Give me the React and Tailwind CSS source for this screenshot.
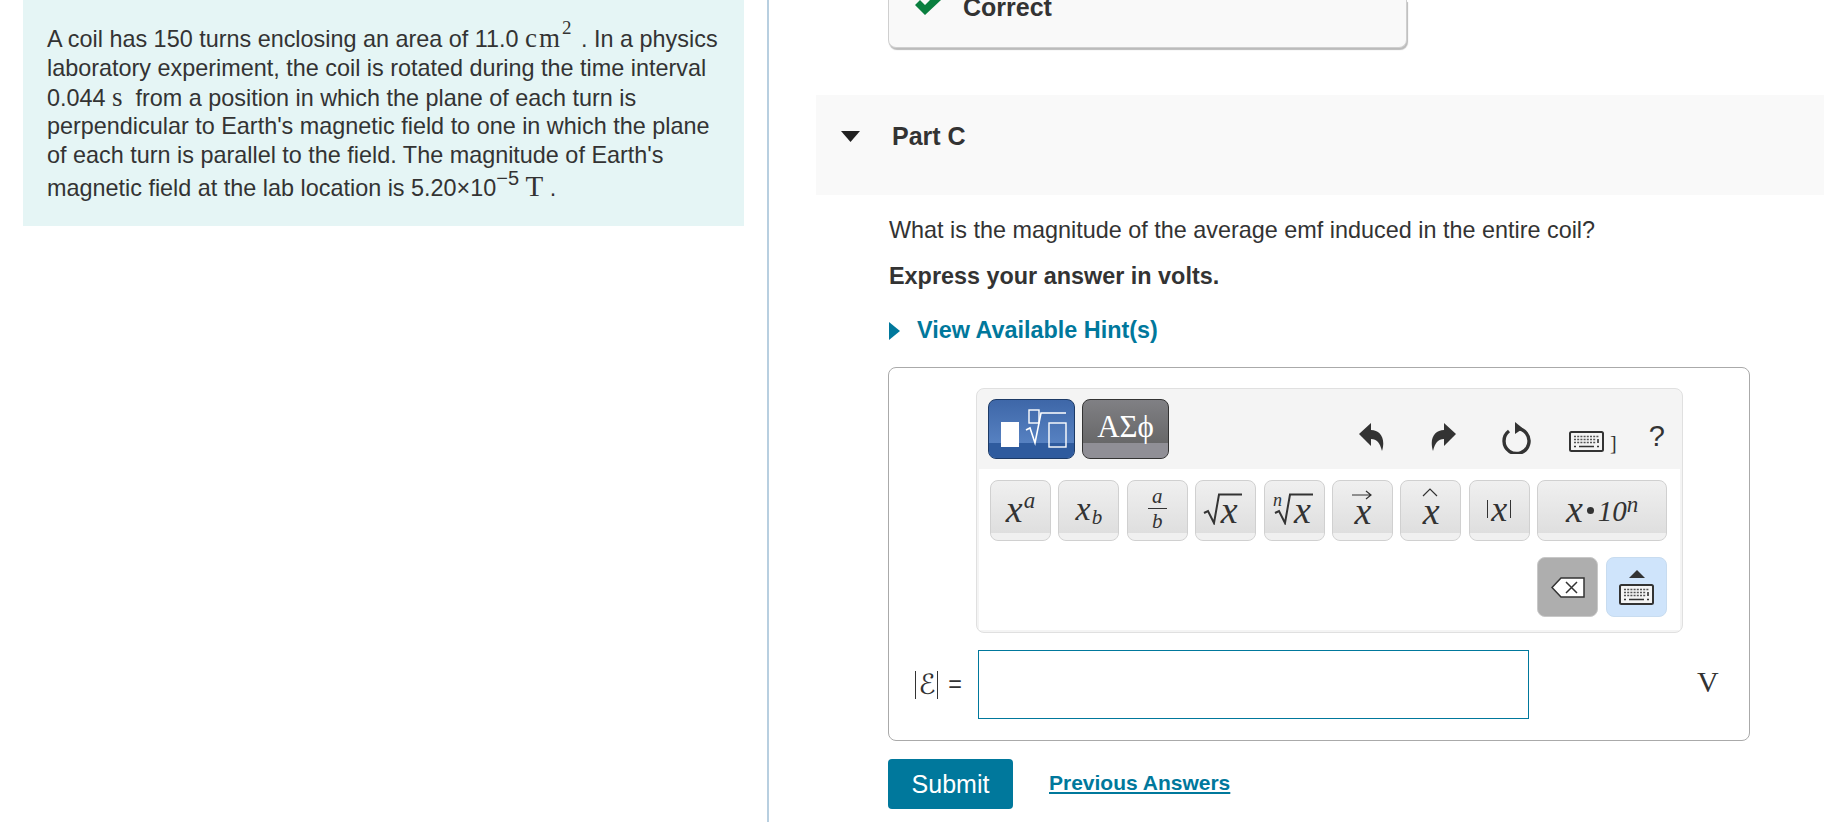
import React from "react";

const serif = "font-['Liberation_Serif',serif]";

const Keyboard = () => (
  <svg width="35" height="21" viewBox="0 0 35 21">
    <rect x="1" y="1" width="33" height="19" rx="1.5" fill="#f4f4f4" stroke="#333" strokeWidth="2" />
    <path d="M5 5.5H30M5 8.5H27M5 11.5H27" stroke="#555" strokeWidth="1.6" strokeDasharray="2 1.2" />
    <path d="M29 8V12M5 15.5H7M10 15.5H25M28 15.5H30" stroke="#333" strokeWidth="1.6" />
  </svg>
);

const Radical = () => (
  <svg className="absolute left-0 top-0" width="40" height="32" viewBox="0 0 40 32">
    <path d="M1 20L5 18L11 30L16 1.5H39" fill="none" stroke="#333" strokeWidth="2" />
  </svg>
);

const KeyButton = ({ width = "w-[61px]", children }) => (
  <div className={`relative ${width} h-[61px] shrink-0 rounded-lg border border-[#d0d0d0] bg-[linear-gradient(#f0f0f0,#dcdcdc)] overflow-hidden`}>
    <div className="absolute bottom-0 left-0 right-0 h-[7px] bg-[#f0f0f0]" />
    <div className={`absolute inset-0 flex items-center justify-center pb-1 ${serif} italic text-[#333]`}>{children}</div>
  </div>
);

function Toolbar() {
  return (
    <div className="ml-[87px] mt-5 w-[707px] h-[245px] rounded-lg border border-[#e0e0e0] bg-[#f4f4f4]">
      <div className="flex h-[80px] pl-[11px] pt-[10px]">
        <div className="relative w-[87px] h-[60px] rounded-lg border border-[#1c3a66] overflow-hidden bg-[linear-gradient(#3e67a8,#5f8aca)]">
          <div className="absolute bottom-0 left-0 right-0 h-[15px] bg-[#2f5b9e]" />
          <svg className="absolute left-0 top-0" width="85" height="58" viewBox="0 0 85 58">
            <rect x="12" y="22" width="18" height="25" fill="#fff" />
            <rect x="40" y="10" width="10" height="13" fill="none" stroke="#fff" strokeWidth="1.4" />
            <path d="M37 30L41 28L46 43L52 13H77" fill="none" stroke="#fff" strokeWidth="1.6" />
            <rect x="60" y="23" width="17" height="24" fill="none" stroke="#fff" strokeWidth="1.4" />
          </svg>
        </div>
        <div className="relative ml-[7px] w-[87px] h-[60px] rounded-lg border border-[#333] overflow-hidden bg-[linear-gradient(#808084,#5f5f5f)]">
          <div className="absolute bottom-0 left-0 right-0 h-[15px] bg-[#908f96]" />
          <div className={`absolute left-0 right-0 top-[10px] text-center ${serif} text-[31px] leading-[34px] text-white`}>ΑΣϕ</div>
        </div>
        <div className="ml-[190px] mt-[23px] flex items-start">
          <svg className="mt-[1px]" width="26" height="29" viewBox="0 0 26 29">
            <path d="M0 11L12 0V7C21 7 27 15 23 28C21 20 18 16 12 16V23Z" fill="#333" />
          </svg>
          <svg className="ml-[45px] mt-[1px]" width="26" height="29" viewBox="0 0 26 29">
            <path d="M26 11L14 0V7C5 7 -1 15 3 28C5 20 8 16 14 16V23Z" fill="#333" />
          </svg>
          <svg className="ml-[44px]" width="32" height="32" viewBox="0 0 32 32">
            <path d="M9 9A12.5 12.5 0 1 0 16 6.5" fill="none" stroke="#333" strokeWidth="3.4" />
            <path d="M15 0L23 6.5L15 12Z" fill="#333" />
          </svg>
          <div className="ml-[37px] mt-[9px]"><Keyboard /></div>
          <div className={`ml-[6px] mt-[11px] ${serif} text-[20px] leading-[20px] text-[#333]`}>]</div>
          <div className="ml-[32px] mt-[-1px] font-['Liberation_Sans',sans-serif] text-[29px] leading-[30px] text-[#333]">?</div>
        </div>
      </div>
      <div className="mx-[2px] h-[161px] bg-white pl-[11px] pt-[11px]">
        <div className="flex gap-[7.4px]">
          <KeyButton><span className="text-[38px] leading-[40px]">x</span><span className="ml-[1px] mb-[16px] text-[23px] leading-[24px]">a</span></KeyButton>
          <KeyButton><span className="text-[34px] leading-[40px]">x</span><span className="ml-[1px] mt-[16px] text-[21px] leading-[24px]">b</span></KeyButton>
          <KeyButton>
            <span className="flex flex-col items-center text-[21px] leading-[24px]">
              <span className="border-b border-[#333] px-1">a</span>
              <span>b</span>
            </span>
          </KeyButton>
          <KeyButton>
            <span className="relative mr-[6px] block h-[32px] w-[40px]"><Radical /><span className="absolute left-[18px] top-[-5px] text-[38px] leading-[44px]">x</span></span>
          </KeyButton>
          <KeyButton>
            <span className="relative block h-[32px] w-[40px]"><Radical /><span className="absolute left-[-1px] top-[-3px] text-[18px] leading-[20px]">n</span><span className="absolute left-[20px] top-[-5px] text-[38px] leading-[44px]">x</span></span>
          </KeyButton>
          <KeyButton>
            <span className="relative block h-[36px] w-[20px]">
              <svg className="absolute left-0 top-[-1px]" width="20" height="10" viewBox="0 0 20 10">
                <path d="M0 5H19M14 1L19 5L14 9" fill="none" stroke="#333" strokeWidth="1.2" />
              </svg>
              <span className="absolute left-[2px] top-[-2px] text-[38px] leading-[44px]">x</span>
            </span>
          </KeyButton>
          <KeyButton>
            <span className="relative block h-[36px] w-[20px]">
              <svg className="absolute left-0 top-[-4px]" width="20" height="10" viewBox="0 0 20 10">
                <path d="M2 9L9 2L16 9" fill="none" stroke="#333" strokeWidth="1.2" />
              </svg>
              <span className="absolute left-[2px] top-[-2px] text-[38px] leading-[44px]">x</span>
            </span>
          </KeyButton>
          <KeyButton>
            <span className="h-[18px] w-px bg-[#333]" />
            <span className="mx-[3px] text-[36px] leading-[40px]">x</span>
            <span className="h-[18px] w-px bg-[#333]" />
          </KeyButton>
          <KeyButton width="w-[130px]">
            <span className="text-[38px] leading-[40px]">x</span>
            <span className="mx-[4px] mt-1 h-[7px] w-[7px] rounded-full bg-[#333]" />
            <span className="mt-1 text-[29px] leading-[36px]">10</span>
            <span className="mb-[8px] text-[23px] leading-[24px]">n</span>
          </KeyButton>
        </div>
        <div className="mt-[16px] ml-[547px] flex gap-[8px]">
          <div className="flex h-[60px] w-[61px] items-center justify-center rounded-lg border border-[#c8c8c8] bg-[#aeaeae]">
            <svg width="34" height="21" viewBox="0 0 34 21">
              <path d="M1 10.5L10 1H33V20H10Z" fill="#fff" stroke="#333" strokeWidth="1.5" />
              <path d="M15 5L26 16M26 5L15 16" stroke="#333" strokeWidth="1.5" />
            </svg>
          </div>
          <div className="flex h-[60px] w-[61px] flex-col items-center justify-center gap-[6px] rounded-lg border border-[#c8dcf0] bg-[#cfe4fb]">
            <svg width="16" height="8" viewBox="0 0 16 8"><path d="M8 0L16 8H0Z" fill="#333" /></svg>
            <Keyboard />
          </div>
        </div>
      </div>
    </div>
  );
}

export default function App() {
  return (
    <div className="flex h-[822px] overflow-hidden bg-white font-['Liberation_Sans',sans-serif] text-[#333] text-[23.4px] leading-[29px]">
      {/* Problem statement */}
      <div className="w-[767px] shrink-0 px-[23px]">
        <div className="h-[226px] bg-[#e5f5f5] pl-6 pt-[24px] whitespace-nowrap leading-[28.8px]">
          <div>A coil has 150 turns enclosing an area of 11.0 <span className={`${serif} text-[27px] tracking-[2px]`}>cm<sup className="-top-[13px] text-[19px] leading-none">2</sup></span><span className="ml-[1px]"> . In a physics</span></div>
          <div>laboratory experiment, the coil is rotated during the time interval</div>
          <div>0.044 <span className={`${serif} text-[27px]`}>s</span> &nbsp;from a position in which the plane of each turn is</div>
          <div>perpendicular to Earth's magnetic field to one in which the plane</div>
          <div>of each turn is parallel to the field. The magnitude of Earth's</div>
          <div className="mt-[2px]">magnetic field at the lab location is 5.20×10<sup className="-top-[11px] text-[20px] leading-none">−5</sup> <span className={`${serif} text-[29px]`}>T</span> .</div>
        </div>
      </div>
      <div className="w-[2px] shrink-0 bg-[#b8cfe0]" />

      {/* Part C */}
      <div className="flex-1">
        <div className="ml-[119px] flex h-[48px] w-[519px] rounded-b-lg border-x border-b border-[#cfcfcf] bg-[#f9f9f9] pl-[26px] shadow-[1px_2px_1px_#bbb]">
          <svg width="26" height="15" viewBox="0 0 26 15">
            <path d="M0 5L5 0L10 5L20 -5L26 0L10 15Z" fill="#0a7f3f" />
          </svg>
          <span className="-mt-[7px] ml-[22px] text-[25px] font-bold">Correct</span>
        </div>

        <div className="ml-[47px] mt-[47px] flex h-[100px] bg-[#f9f9f9] pt-[27px]">
          <svg className="ml-[25px] mt-[9px]" width="19" height="11" viewBox="0 0 19 11">
            <path d="M0 0H19L9.5 11Z" fill="#222" />
          </svg>
          <span className="ml-[32px] text-[25px] font-bold">Part C</span>
        </div>

        <div className="ml-[120px]">
          <p className="mt-[21px]">What is the magnitude of the average emf induced in the entire coil?</p>
          <p className="mt-[17px] font-bold">Express your answer in volts.</p>
          <div className="mt-[25px] flex items-center font-bold text-[#00789c]">
            <svg width="11" height="18" viewBox="0 0 11 18"><path d="M0 0L11 9L0 18Z" fill="#00789c" /></svg>
            <span className="ml-[17px]">View Available Hint(s)</span>
          </div>

          <div className="-ml-px mt-[22px] h-[374px] w-[862px] rounded-lg border border-[#aaa]">
            <Toolbar />
            <div className="mt-[17px] flex items-center">
              <div className="flex w-[89px] items-center justify-end pr-4">
                <span className="h-[28px] w-px bg-[#333]" />
                <span className="mx-[2px] font-['DejaVu_Sans',sans-serif] text-[28px] italic">ℰ</span>
                <span className="h-[28px] w-px bg-[#333]" />
                <span className="ml-[10px]">=</span>
              </div>
              <div className="h-[69px] w-[551px] border border-[#00789c]" />
              <span className={`mb-[6px] ml-[168px] ${serif} text-[30px]`}>V</span>
            </div>
          </div>

          <div className="-ml-px mt-[18px] flex items-center">
            <div className="flex h-[50px] w-[125px] items-center justify-center rounded bg-[#00789c] text-[25px] text-white">Submit</div>
            <span className="mb-[4px] ml-[36px] text-[21px] font-bold text-[#00789c] underline decoration-2 underline-offset-2">Previous Answers</span>
          </div>
        </div>
      </div>
    </div>
  );
}
